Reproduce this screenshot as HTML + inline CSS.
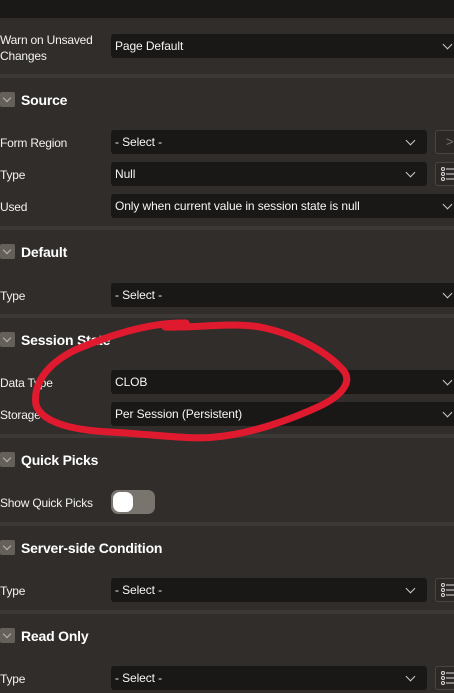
<!DOCTYPE html>
<html><head><meta charset="utf-8"><style>
*{margin:0;padding:0;box-sizing:border-box}
body{width:454px;height:693px;overflow:hidden;background:#312d2a;font-family:"Liberation Sans",sans-serif;color:#fff;position:relative}
.a{position:absolute}
.top{left:0;top:0;width:454px;height:18px;background:#1b1918}
.sep{left:0;width:454px;height:4px;background:#3d3936}
.lbl{left:0;font-size:12px;color:#f2f2f2;white-space:nowrap;letter-spacing:-0.2px}
.sel{background:#1a1817;border-radius:3px;height:24px;font-size:12px;padding-left:4px;line-height:25px;color:#f5f5f5;letter-spacing:-0.1px}
.hd{left:0;height:16px;font-size:14px;font-weight:bold;white-space:nowrap;letter-spacing:-0.2px}
.hd i{position:absolute;left:0;top:0;width:15px;height:15px;background:#66605b;border-radius:2px}
.hd i:after{content:"";position:absolute;left:4px;top:3px;width:5px;height:5px;border-right:1px solid #bbb;border-bottom:1px solid #bbb;transform:rotate(45deg)}
.hd span{position:absolute;left:21px;top:0px}
.chev{position:absolute;width:7px;height:7px;border-right:1.3px solid #ccc;border-bottom:1.3px solid #ccc;transform:rotate(45deg);top:7px}
.btn{position:absolute;left:435px;width:30px;height:24px;border:1px solid #4a4541;border-radius:3px;background:#2b2826}
</style></head><body>
<div class="a top"></div>
<div class="a lbl" style="top:32px;line-height:16px">Warn on Unsaved<br>Changes</div>
<div class="a sel" style="left:111px;top:34px;width:360px">Page Default<div class="chev" style="left:333px"></div></div>
<div class="a sep" style="top:74px"></div>

<div class="a hd" style="top:92px"><i></i><span>Source</span></div>
<div class="a lbl" style="top:136px">Form Region</div>
<div class="a sel" style="left:111px;top:130px;width:316px">- Select -<div class="chev" style="left:296px"></div></div>
<div class="btn" style="top:130px"><span style="position:absolute;left:10px;top:3px;color:#777;font-size:13px">&gt;</span></div>
<div class="a lbl" style="top:168px">Type</div>
<div class="a sel" style="left:111px;top:162px;width:316px">Null<div class="chev" style="left:296px"></div></div>
<div class="btn" style="top:162px"><svg width="20" height="22" style="position:absolute;left:4px;top:1px"><g fill="none" stroke="#ddd" stroke-width="1"><circle cx="3" cy="5" r="1.5"/><circle cx="3" cy="10" r="1.5"/><circle cx="3" cy="15" r="1.5"/><path d="M6 5h10M6 10h10M6 15h10"/></g></svg></div>
<div class="a lbl" style="top:200px">Used</div>
<div class="a sel" style="left:111px;top:194px;width:360px">Only when current value in session state is null<div class="chev" style="left:333px"></div></div>
<div class="a sep" style="top:226px"></div>

<div class="a hd" style="top:244px"><i></i><span>Default</span></div>
<div class="a lbl" style="top:289px">Type</div>
<div class="a sel" style="left:111px;top:283px;width:360px">- Select -<div class="chev" style="left:333px"></div></div>
<div class="a sep" style="top:314px"></div>

<div class="a hd" style="top:332px"><i></i><span>Session State</span></div>
<div class="a lbl" style="top:376px">Data Type</div>
<div class="a sel" style="left:111px;top:370px;width:360px">CLOB<div class="chev" style="left:333px"></div></div>
<div class="a lbl" style="top:408px">Storage</div>
<div class="a sel" style="left:111px;top:402px;width:360px">Per Session (Persistent)<div class="chev" style="left:333px"></div></div>
<div class="a sep" style="top:434px"></div>

<div class="a hd" style="top:452px"><i></i><span>Quick Picks</span></div>
<div class="a lbl" style="top:496px">Show Quick Picks</div>
<div class="a" style="left:111px;top:490px;width:44px;height:24px;border-radius:7px;background:#7a746f"><div style="position:absolute;left:2px;top:2px;width:20px;height:20px;border-radius:7px;background:#fff"></div></div>
<div class="a sep" style="top:522px"></div>

<div class="a hd" style="top:540px"><i></i><span>Server-side Condition</span></div>
<div class="a lbl" style="top:584px">Type</div>
<div class="a sel" style="left:111px;top:578px;width:316px">- Select -<div class="chev" style="left:296px"></div></div>
<div class="btn" style="top:578px"><svg width="20" height="22" style="position:absolute;left:4px;top:1px"><g fill="none" stroke="#ddd" stroke-width="1"><circle cx="3" cy="5" r="1.5"/><circle cx="3" cy="10" r="1.5"/><circle cx="3" cy="15" r="1.5"/><path d="M6 5h10M6 10h10M6 15h10"/></g></svg></div>
<div class="a sep" style="top:610px"></div>

<div class="a hd" style="top:628px"><i></i><span>Read Only</span></div>
<div class="a lbl" style="top:672px">Type</div>
<div class="a sel" style="left:111px;top:666px;width:316px">- Select -<div class="chev" style="left:296px"></div></div>
<div class="btn" style="top:666px"><svg width="20" height="22" style="position:absolute;left:4px;top:1px"><g fill="none" stroke="#ddd" stroke-width="1"><circle cx="3" cy="5" r="1.5"/><circle cx="3" cy="10" r="1.5"/><circle cx="3" cy="15" r="1.5"/><path d="M6 5h10M6 10h10M6 15h10"/></g></svg></div>

<svg class="a" style="left:0;top:0" width="454" height="693"><path d="M186 323 C150 322 110 335 75 350 C45 365 33 385 36 405 C42 422 70 430 110 432 C150 434 190 440 215 437 C250 434 290 420 320 406 C345 394 352 380 343 370 C330 355 300 335 260 327 C230 322 200 328 165 327" fill="none" stroke="#e01a2e" stroke-width="7" stroke-linecap="round"/></svg>
</body></html>
